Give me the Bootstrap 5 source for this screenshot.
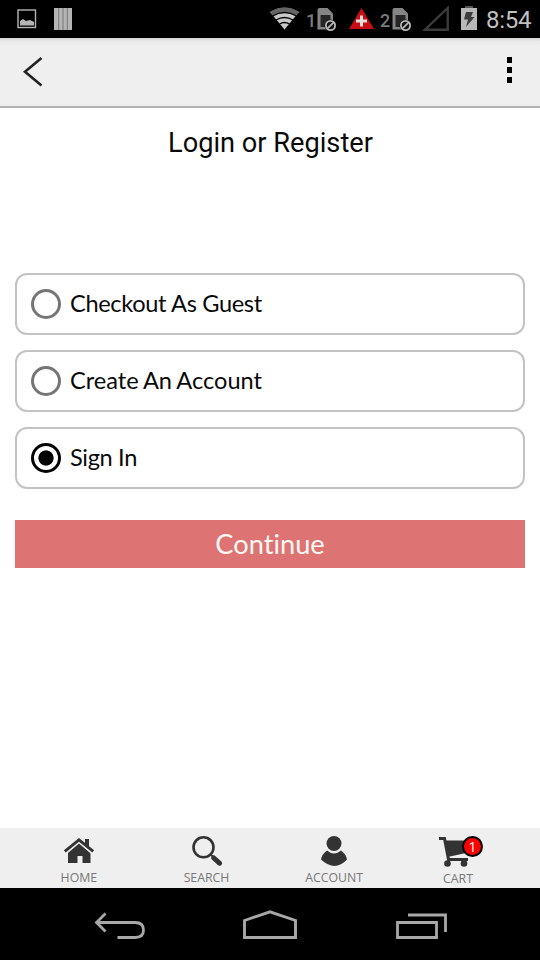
<!DOCTYPE html>
<html lang="en">
<head>
<meta charset="utf-8">
<meta name="viewport" content="width=device-width, initial-scale=1">
<title>Login or Register</title>
<link href="https://cdn.jsdelivr.net/npm/bootstrap@5.3.0/dist/css/bootstrap.min.css" rel="stylesheet">
<style>
body { font-family: Lato, "Open Sans", sans-serif; color: #0a0a0a; }
svg { display: block; flex: none; }
.screen { width: 540px; height: 960px; }
.status-bar { height: 38px; font-family: Roboto, sans-serif; color: #c0c0c0; }
.status-bar .clock { font-size: 24px; line-height: 40px; margin-left: 8px; width: 47px; white-space: nowrap; letter-spacing: -.3px; }
.sim-no { font-size: 18px; line-height: 41px; color: #7b7b7b; width: 11px; font-weight: 500; }
.status-left { padding-left: 17px; gap: 17px; }
.status-right { padding-right: 7px; }
.app-bar { height: 70px; background: linear-gradient(#d2d2d2 0, #e9e9e9 3px, #efefef 8px); border-bottom: 2px solid #b0b0b0; padding: 0 27px 0 22px; }
.page-title { font-family: Roboto, sans-serif; font-size: 27.2px; line-height: 32px; margin: 19px 0 114px; padding-left: 1px; font-weight: 400; color: #0a0a0a; }
.options { gap: 15px; padding: 0 15px; }
.option { height: 62px; border: 2px solid #c3c3c3; border-radius: 12px; padding-left: 14px; gap: 9px; font-size: 23.6px; line-height: 30px; letter-spacing: -.35px; cursor: pointer; }
.option span { padding-bottom: 2px; }
.option .wide { letter-spacing: 0; word-spacing: -1px; }
.option .form-check-input { width: 30px; height: 30px; margin: 0; border: 3px solid #757575; background-color: #fff; flex: none; box-shadow: none; }
.option .form-check-input:checked { border-color: #000; background-image: radial-gradient(circle, #000 7.2px, transparent 8px); background-size: 100% 100%; }
.btn-continue { margin: 31px 15px 0; height: 48px; background: #de7373; color: #fffaf5; font-size: 27.2px; line-height: 48px; letter-spacing: .02px; }
.btn-continue:hover { background: #d06464; color: #fff; }
.tab-bar { height: 60px; background: #efefef; padding: 5px 22px 0 15px; font-family: "Open Sans", sans-serif; font-size: 12.3px; line-height: 17px; }
.tab-bar a { color: #777; gap: 3px; }
.tab-bar .tab-cart { flex: 0 0 120px; }
.cart-count { left: 23px; top: 3px; width: 21px; height: 21px; border: 2px solid #000; background: #f00; color: #fff; font-size: 14px; line-height: 17px; }
.system-bar { height: 72px; padding: 0 92px 0 94px; }
</style>
</head>
<body>
<div class="screen d-flex flex-column bg-white overflow-hidden">
  <div class="status-bar bg-black d-flex justify-content-between">
    <div class="status-left d-flex align-items-center">
      <svg width="20" height="38" viewBox="17 0 20 38"><rect x="18" y="10" width="17.5" height="17.5" fill="none" stroke="#b5b5b5" stroke-width="1.4"/><path d="M20 25.500V21l3-2 3 2 4-1 4 2v3.500z" fill="#b5b5b5"/></svg>
      <svg width="18" height="38" viewBox="54 0 18 38"><path d="M54 8h18v22H54z" fill="#b5b5b5"/><path d="M58.700 8v22M63 8v22M67.300 8v22" stroke="#777" stroke-width="1"/></svg>
    </div>
    <div class="status-right d-flex">
      <svg width="36" height="38" viewBox="270 0 36 38"><path d="M284.500 29.500L270 12q14.500-8.500 29 0z" fill="#c8c8c8"/><path d="M284.500 7.600Q277 7.600 270 12l3 3.700q11.500-6.800 23 0l3-3.700q-7-4.400-14.500-4.400z" fill="#646464"/><path d="M272.500 16q12-7 24 0M276 20q8.500-5 17 0M279.500 24q5-3 10 0" fill="none" stroke="#000" stroke-width="1.300"/></svg>
      <span class="sim-no">1</span>
      <svg width="32" height="38" viewBox="317 0 32 38"><path d="M317.500 10q0-2 2-2h8l5.500 5.500V29.500h-15.500z" fill="#858585"/><path d="M320.500 15h10v12h-10z" fill="#262626"/><circle cx="330.500" cy="25.500" r="6" fill="#111"/><circle cx="330.500" cy="25.500" r="4.600" fill="none" stroke="#b8b8b8" stroke-width="1.800"/><path d="M327.300 28.700l6.400-6.400" stroke="#b8b8b8" stroke-width="1.800"/></svg>
      <svg width="31" height="38" viewBox="349 0 31 38"><path d="M361.500 8L374 29h-25z" fill="#c80d14"/><path d="M361.500 15.500v11M356 21h11" stroke="#e5dcdc" stroke-width="3"/></svg>
      <span class="sim-no">2</span>
      <svg width="31" height="38" viewBox="316 0 31 38"><path d="M317.500 10q0-2 2-2h8l5.500 5.500V29.500h-15.500z" fill="#858585"/><path d="M320.500 15h10v12h-10z" fill="#262626"/><circle cx="330.500" cy="25.500" r="6" fill="#111"/><circle cx="330.500" cy="25.500" r="4.600" fill="none" stroke="#b8b8b8" stroke-width="1.800"/><path d="M327.300 28.700l6.400-6.400" stroke="#b8b8b8" stroke-width="1.800"/></svg>
      <svg width="39" height="38" viewBox="422 0 39 38"><path d="M425 29.700L447.700 8v21.700z" fill="none" stroke="#3b3b3b" stroke-width="2.400"/></svg>
      <svg width="17" height="38" viewBox="461 0 17 38"><path d="M461 8h16v22h-16z" fill="#b8b8b8"/><path d="M465 6h8v2h-8z" fill="#555"/><path d="M466 12h7l-2 5h3.500l-8.500 10 2-7.500h-4z" fill="#3d3d3d"/></svg>
      <span class="clock">8:54</span>
    </div>
  </div>

  <header class="app-bar d-flex align-items-center justify-content-between">
    <a href="#" aria-label="Back"><svg width="22" height="68" viewBox="22 38 22 68"><path d="M41.500 58L25 71.700l16.500 13.700" fill="none" stroke="#222" stroke-width="2.600"/></svg></a>
    <a href="#" aria-label="More"><svg width="6" height="68" viewBox="507 38 6 68"><path d="M507 57h5v6h-5zM507 67h5v6h-5zM507 77h5v6h-5z" fill="#000"/></svg></a>
  </header>

  <main class="flex-grow-1 d-flex flex-column">
    <h1 class="page-title text-center">Login or Register</h1>
    <div class="options d-flex flex-column">
      <label class="option d-flex align-items-center"><input class="form-check-input" type="radio" name="checkout"><span>Checkout As Guest</span></label>
      <label class="option d-flex align-items-center"><input class="form-check-input" type="radio" name="checkout"><span class="wide">Create An Account</span></label>
      <label class="option d-flex align-items-center"><input class="form-check-input" type="radio" name="checkout" checked><span>Sign In</span></label>
    </div>
    <button class="btn-continue btn rounded-0 border-0 p-0" type="button">Continue</button>
  </main>

  <nav class="tab-bar row g-0 text-center">
    <a href="#" class="col d-flex flex-column align-items-center text-decoration-none">
      <svg width="32" height="33" viewBox="63 833 32 33"><g fill="#333"><path d="M79 842.500l11.500 9.500v11h-8v-7h-5v7h-9.500V852z"/></g><path d="M64.800 852.300L79 840.300l14.200 12" fill="none" stroke="#efefef" stroke-width="4.800"/><path d="M85 839h4v9l-4-3.500z" fill="#333"/><path d="M64.800 851.300L79 839.900l14.200 11.400" fill="none" stroke="#333" stroke-width="2.900"/></svg>
      <span>HOME</span>
    </a>
    <a href="#" class="col d-flex flex-column align-items-center text-decoration-none">
      <svg width="32" height="33" viewBox="191 833 32 33"><circle cx="203.500" cy="847.300" r="10" fill="none" stroke="#333" stroke-width="2.600"/><path d="M210.500 854.500l3 2.500" stroke="#333" stroke-width="2"/><path d="M213.800 858l5.700 5.200" stroke="#333" stroke-width="5" stroke-linecap="round"/></svg>
      <span>SEARCH</span>
    </a>
    <a href="#" class="col d-flex flex-column align-items-center text-decoration-none">
      <svg width="32" height="33" viewBox="318 833 32 33"><path d="M327 850.500q7 6 14 0 5 3.500 6 9-12 13-26 0 1-5.500 6-9z" fill="#333"/><circle cx="334" cy="843.500" r="7.500" fill="#333"/></svg>
      <span>ACCOUNT</span>
    </a>
    <a href="#" class="tab-cart d-flex flex-column align-items-center text-decoration-none">
      <span class="position-relative">
        <svg width="38" height="34" viewBox="439 833 38 34"><path d="M439 838.500h5.500l4 21h19.500" fill="none" stroke="#333" stroke-width="3"/><path d="M444.500 840.500H472l-3.500 12-21 4.500z" fill="#333"/><circle cx="447.500" cy="863.500" r="3.300" fill="#333"/><circle cx="464" cy="863.500" r="3.300" fill="#333"/></svg>
        <span class="cart-count position-absolute rounded-circle">1</span>
      </span>
      <span>CART</span>
    </a>
  </nav>

  <div class="system-bar bg-black d-flex justify-content-between">
    <svg width="52" height="72" viewBox="94 888 52 72"><path d="M97 922.500h38q8.500 0 8.500 7.500t-8.500 7.500h-17.500M105.500 913.500l-9 9 9 9" fill="none" stroke="#a8a8a8" stroke-width="2.800"/></svg>
    <svg width="56" height="72" viewBox="243 888 56 72"><path d="M244.500 920.500l25.500-8.700 25.500 8.700v17h-51z" fill="none" stroke="#a8a8a8" stroke-width="2.900"/></svg>
    <svg width="52" height="72" viewBox="396 888 52 72"><path d="M397.500 922.500h39v15h-39zM408 915h37.500v17" fill="none" stroke="#a8a8a8" stroke-width="2.800"/></svg>
  </div>
</div>
<script src="https://cdn.jsdelivr.net/npm/bootstrap@5.3.0/dist/js/bootstrap.bundle.min.js"></script>
</body>
</html>
